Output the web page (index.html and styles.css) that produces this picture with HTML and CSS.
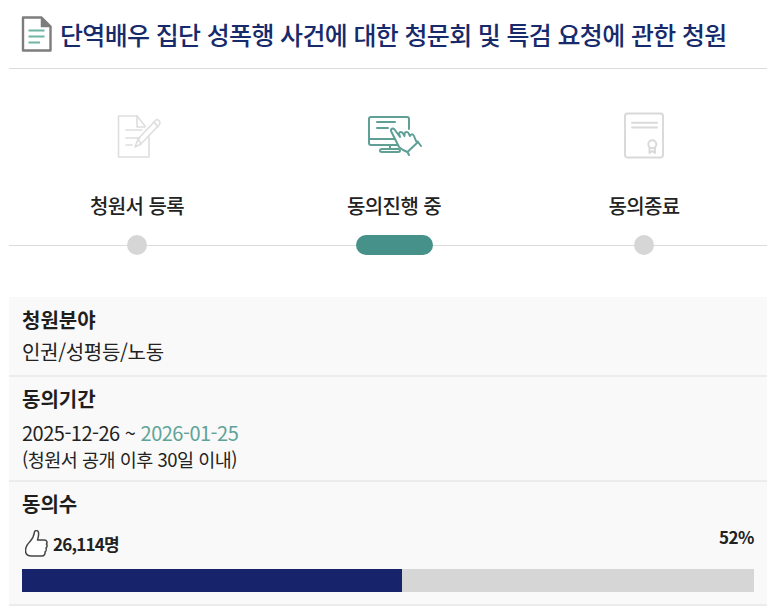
FILE: index.html
```html
<!DOCTYPE html>
<html lang="ko">
<head>
<meta charset="utf-8">
<title>청원</title>
<link rel="stylesheet" href="styles.css">
</head>
<body>
<main class="page">
  <header class="head">
    <svg class="doc" width="31" height="36" viewBox="0 0 31 36" aria-hidden="true">
      <path d="M2 1.500H20.500L29.500 10.500V34.500H2Z" fill="#fff" stroke="#7d7d7d" stroke-width="2.400" stroke-linejoin="round"/>
      <path d="M20.500 1.500V10.500H29.500Z" fill="#7d7d7d" stroke="#7d7d7d" stroke-width="1.500" stroke-linejoin="round"/>
      <path d="M7.500 14.500H23.500M7.500 20.500H23.500M7.500 26.500H19" stroke="#6fb5a3" stroke-width="2.200" fill="none"/>
    </svg>
    <h1 class="title">단역배우 집단 성폭행 사건에 대한 청문회 및 특검 요청에 관한 청원</h1>
  </header>

  <section class="steps">
    <div class="step">
      <svg class="ico" width="50" height="45" viewBox="22 18 50 45" aria-hidden="true">
        <g fill="none" stroke="#dedede" stroke-width="1.600" stroke-linejoin="round" stroke-linecap="round">
          <path d="M47 21H28.500V62H59V42"/>
          <path d="M47 21V32H55"/>
          <path d="M47 21L55 31"/>
          <path d="M36 35H52M36 43H50M36 50H42"/>
          <path d="M45 52L48 44L66 25C67 24 69 25 70 27C70 28 70 29 69 30L51 49Z"/>
          <path d="M48 44L51 49M64 27L68 32"/>
        </g>
      </svg>
      <span class="label">청원서 등록</span>
      <span class="dot"></span>
    </div>
    <div class="step">
      <svg class="ico" width="60" height="45" viewBox="14 13 60 45" aria-hidden="true">
        <g fill="none" stroke="#5f9f95" stroke-width="2" stroke-linejoin="round" stroke-linecap="round">
          <path d="M50 45H21C19.500 45 19 44.500 19 43V19C19 17.500 19.500 17 21 17H57C58.500 17 59 17.500 59 19V29"/>
          <path d="M19 39H46"/>
          <path d="M27 22H45M27 28H38"/>
          <path d="M40 45V49"/>
          <path d="M32 49H48C49.500 49 50 50 50 50.500C50 51.500 49.500 52 48 52H32C30.500 52 30 51.500 30 50.500C30 50 30.500 49 32 49Z"/>
          <path d="M49 47L41 31C40.500 29 43 27.500 44.500 29.500L50 37L49 33.500C49.500 31.500 52 31.500 53 33.500L54.500 36L54.500 33.500C55.500 31.500 58 31.500 59 34L60 36C61 33.500 63 33.500 64 36L66 41L68 42L57.500 52L53 50Z" fill="#fff"/>
          <path d="M68 42L71 46M57.500 52L59 55"/>
        </g>
      </svg>
      <span class="label">동의진행 중</span>
      <span class="dot dot-on"></span>
    </div>
    <div class="step">
      <svg class="ico" width="44" height="49" viewBox="22 11 44 49" aria-hidden="true">
        <g fill="none" stroke="#d9d9d9" stroke-width="1.900" stroke-linejoin="round" stroke-linecap="round">
          <rect x="25" y="13.500" width="38" height="44" rx="2.500"/>
          <path d="M32 22.700H57M32 27.500H57"/>
          <circle cx="52.300" cy="44.300" r="4"/>
          <path d="M49.500 48V53L52.300 51L55 53V48"/>
        </g>
      </svg>
      <span class="label">동의종료</span>
      <span class="dot"></span>
    </div>
  </section>

  <section class="info">
    <div class="row row-a">
      <h2 class="name">청원분야</h2>
      <p class="val">인권/성평등/노동</p>
    </div>
    <div class="row row-b">
      <h2 class="name">동의기간</h2>
      <p class="val">2025-12-26 ~ <span class="end">2026-01-25</span></p>
      <p class="note">(청원서 공개 이후 30일 이내)</p>
    </div>
    <div class="row row-c">
      <h2 class="name">동의수</h2>
      <div class="count">
        <svg class="thumb" width="23" height="27" viewBox="2 1.500 23 27" aria-hidden="true">
          <path d="M7 13C10 10 11 7 11.500 3.500C12 1.500 15 1.500 15.500 4C16 7 15 9.500 14.500 11.500H21.500C24 11.500 24.500 14 23.500 15.500C24.500 17 24 19 23 19.500C23.500 21 23 23 22 23.500C22.500 25.500 21 27.500 19 27.500H8.500C5 27.500 2.500 25.500 2.500 22C2.500 18 4.500 15.500 7 13Z" fill="#fff" stroke="#444" stroke-width="1.500" stroke-linejoin="round"/>
        </svg>
        <strong class="num">26,114명</strong>
        <strong class="pct">52%</strong>
      </div>
      <div class="bar"><div class="fill" style="width:51.900%"></div></div>
    </div>
  </section>
</main>
</body>
</html>
```

FILE: styles.css
```css
* { box-sizing: border-box; }
html, body { margin: 0; padding: 0; background: #fff; }
body {
  font-family: "Noto Sans CJK KR", "Noto Sans", sans-serif;
  color: #222;
}
.page { width: 758px; margin-left: 9px; }
.head {
  display: flex;
  align-items: center;
  height: 69px;
  padding: 0 0 0 12px;
  gap: 8px;
  border-bottom: 1px solid #dcdcdc;
}
.doc { flex: none; }
.title {
  margin: 0;
  font-size: 25px;
  font-weight: 500;
  line-height: 32px;
  letter-spacing: -0.66px;
  color: #172a6b;
  white-space: nowrap;
}
.steps {
  display: grid;
  grid-template-columns: 256px 258px 242px;
  height: 187px;
  background: linear-gradient(#dcdcdc, #dcdcdc) 0 176px / 100% 1px no-repeat;
}
.step {
  display: grid;
  grid-template-rows: 75px 62px 20px;
  justify-items: center;
  align-items: center;
  padding-top: 29px;
}
.ico { display: block; }
.label {
  margin-top: 3px;
  font-size: 20px;
  font-weight: 500;
  letter-spacing: -0.6px;
  line-height: 28px;
  color: #222;
}
.dot {
  width: 20px;
  height: 20px;
  border-radius: 10px;
  background: #d6d6d6;
}
.dot-on { width: 77px; background: #46918a; }
.info { margin-top: 41px; background: #f9f9f9; }
.row { padding: 0 13px; border-bottom: 2px solid #ececec; }
.row-a { height: 80px; padding-top: 8px; }
.row-b { height: 105px; padding-top: 7px; }
.row-c { height: 124px; padding-top: 7px; }
.name {
  margin: 0;
  font-size: 20px;
  font-weight: 700;
  line-height: 30px;
  letter-spacing: 0;
  color: #1e1e1e;
}
.val {
  margin: 6px 0 0;
  font-size: 20px;
  font-weight: 400;
  line-height: 26px;
  letter-spacing: -0.5px;
  color: #222;
}
.row-a .val { margin-top: 4px; letter-spacing: -0.3px; }
.end { color: #5fa398; }
.note {
  margin: 1px 0 0;
  font-size: 18.500px;
  line-height: 24px;
  letter-spacing: -0.5px;
  color: #222;
}
.count {
  display: flex;
  align-items: center;
  height: 36px;
  margin-top: 6px;
  gap: 5px;
}
.thumb { flex: none; margin-left: 3px; }
.num {
  font-size: 17px;
  font-weight: 700;
  letter-spacing: -0.8px;
  color: #222;
}
.pct {
  margin-left: auto;
  margin-top: -14px;
  font-size: 17px;
  font-weight: 700;
  letter-spacing: -0.5px;
  color: #222;
}
.bar { height: 23px; margin-top: 8px; background: #d6d6d6; }
.fill { height: 100%; background: #17246c; }
```
